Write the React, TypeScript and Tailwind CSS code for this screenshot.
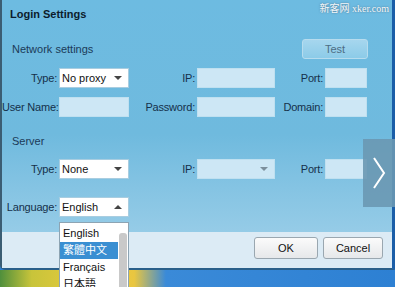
import React from 'react';

const font = { fontFamily: '"Liberation Sans", Arial, sans-serif' };

const Label: React.FC<{ text: string; w: string }> = ({ text, w }) => (
  <span className={`${w} shrink-0 whitespace-nowrap pr-[2px] text-right text-[11px] tracking-[-0.2px] text-[#15304a]`}>{text}</span>
);

const Field: React.FC<{ w: string }> = ({ w }) => (
  <div className={`${w} h-[20px] shrink-0 border border-[#bfe0f0] bg-[#cde7f5]`} />
);

const Select: React.FC<{ value: string; up?: boolean }> = ({ value, up }) => (
  <div className="flex h-[20px] w-[70px] shrink-0 items-center justify-between border border-[#a9cde0] bg-white pl-[2px] pr-[6px] text-[11px] text-[#111]">
    <span>{value}</span>
    <span className={`h-0 w-0 border-x-[4px] border-x-transparent ${up ? 'border-b-[4px] border-b-[#444]' : 'border-t-[4px] border-t-[#444]'}`} />
  </div>
);

export default function App() {
  return (
    <div className="relative h-[287px] w-[395px] overflow-hidden bg-[#2d80d3]" style={font}>
      {/* dialog */}
      <div className="flex h-[270px] w-[395px] flex-col rounded-bl-[5px] border-l-[2px] border-r-[3px] border-b-[2px] border-l-[#3b5d73] border-r-[#1b5ea8] border-b-[#2a5f8a] bg-gradient-to-b from-[#6dbbe1] via-[#6fbade] to-[#a3d2ea]">
        <div className="h-[32px] pl-[8px] pt-[6px] text-[11px] font-bold text-[#0c1c2c]">Login Settings</div>

        <div className="flex h-[34px] items-center justify-between pr-[24px]">
          <span className="pl-[10px] text-[11px] text-[#1b3a58]">Network settings</span>
          <div className="flex h-[20px] w-[66px] items-center justify-center rounded-[3px] border border-[#b7dcee] bg-gradient-to-b from-[#a6d6ee] to-[#8ccbe8] text-[11px] text-[#4d6d84]">
            Test
          </div>
        </div>

        <div className="mt-[2px] flex flex-col gap-[9px]">
          <div className="flex items-center">
            <Label text="Type:" w="w-[57px]" />
            <Select value="No proxy" />
            <Label text="IP:" w="w-[68px]" />
            <Field w="w-[78px]" />
            <Label text="Port:" w="w-[50px]" />
            <Field w="w-[42px]" />
          </div>
          <div className="flex items-center">
            <Label text="User Name:" w="w-[57px]" />
            <Field w="w-[70px]" />
            <Label text="Password:" w="w-[68px]" />
            <Field w="w-[78px]" />
            <Label text="Domain:" w="w-[50px]" />
            <Field w="w-[42px]" />
          </div>
        </div>

        <div className="flex h-[42px] items-center pl-[10px] pt-[6px] text-[11px] text-[#1b3a58]">Server</div>

        <div className="flex items-center">
          <Label text="Type:" w="w-[57px]" />
          <Select value="None" />
          <Label text="IP:" w="w-[68px]" />
          <div className="flex h-[20px] w-[78px] shrink-0 items-center justify-end border border-[#bfe0f0] bg-[#cde7f5] pr-[6px]">
            <span className="h-0 w-0 border-x-[4px] border-x-transparent border-t-[4px] border-t-[#7c8f9c]" />
          </div>
          <Label text="Port:" w="w-[50px]" />
          <Field w="w-[42px]" />
        </div>

        <div className="mt-[18px] flex items-center">
          <Label text="Language:" w="w-[57px]" />
          <Select value="English" up />
        </div>

        <div className="mt-auto flex h-[36px] items-start justify-end gap-[5px] bg-[#dcebf5] pr-[9px] pt-[5px]">
          <div className="flex h-[22px] w-[64px] items-center justify-center rounded-[3px] border border-[#9aa7b0] bg-gradient-to-b from-[#fbfbfb] to-[#e6e8ea] text-[11px] text-[#111]">
            OK
          </div>
          <div className="flex h-[22px] w-[60px] items-center justify-center rounded-[3px] border border-[#9aa7b0] bg-gradient-to-b from-[#fbfbfb] to-[#e6e8ea] text-[11px] text-[#111]">
            Cancel
          </div>
        </div>
      </div>

      {/* desktop strip */}
      <div className="h-[17px] w-full bg-[linear-gradient(90deg,#4f8f3c_0%,#c8c43a_8%,#f0cc3e_25%,#e9c640_34%,#3a8ad8_42%,#2d80d3_100%)]" />

      {/* watermark */}
      <div className="absolute right-[6px] top-[1px] text-[10px] text-[#f4f8fb] [text-shadow:0_0_2px_#4b6d86]" style={{ fontFamily: '"Liberation Serif", "Noto Sans CJK SC", serif' }}>
        新客网 xker.com
      </div>

      {/* next arrow overlay */}
      <div className="absolute left-[363px] top-[139px] flex h-[68px] w-[32px] items-center justify-center bg-[#6a98b3]/90">
        <svg width="14" height="34" viewBox="0 0 14 34">
          <path d="M2 2 L12 17 L2 32" fill="none" stroke="#fff" strokeWidth="2" />
        </svg>
      </div>

      {/* open dropdown list */}
      <div className="absolute left-[59px] top-[222px] h-[70px] w-[70px] border border-[#8da4b3] bg-white text-[11px]">
        <div className="flex">
          <div className="flex w-[58px] flex-col pt-[2px]">
            <div className="h-[17px] pl-[3px] leading-[17px] text-[#111]">English</div>
            <div className="h-[17px] bg-[#3a8fd2] pl-[3px] leading-[17px] text-white" style={{ fontFamily: '"Liberation Sans", "Noto Sans CJK TC", sans-serif' }}>繁體中文</div>
            <div className="h-[17px] pl-[3px] leading-[17px] text-[#111]">Français</div>
            <div className="h-[17px] pl-[3px] leading-[17px] text-[#111]" style={{ fontFamily: '"Liberation Sans", "Noto Sans CJK JP", sans-serif' }}>日本語</div>
          </div>
          <div className="ml-auto mr-[1px] mt-[10px] h-[60px] w-[8px] rounded-[3px] bg-[#c9c9c9]" />
        </div>
      </div>
    </div>
  );
}
